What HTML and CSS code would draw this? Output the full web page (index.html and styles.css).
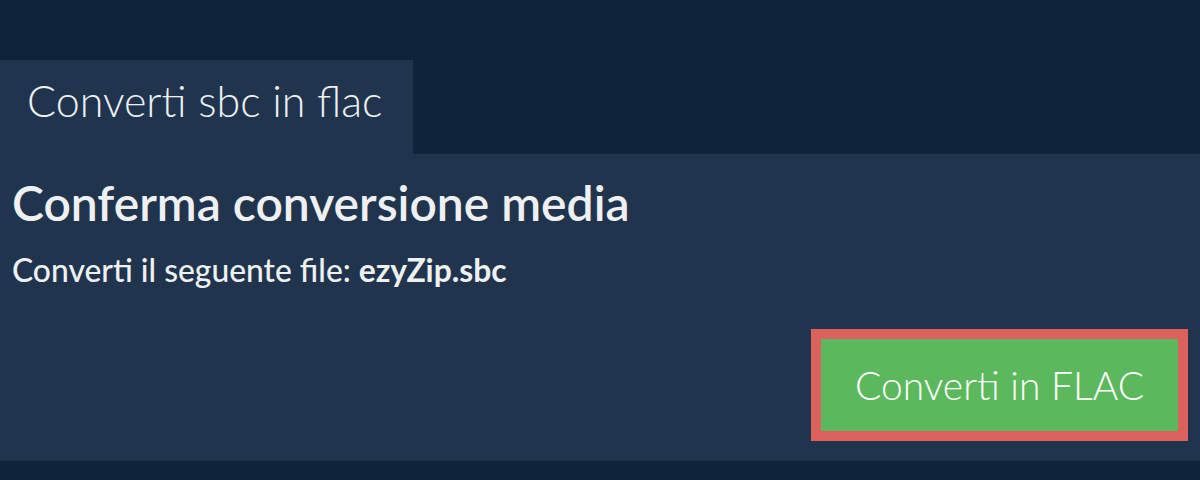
FILE: index.html
```html
<!DOCTYPE html>
<html lang="it">
<head>
<meta charset="utf-8">
<title>Converti sbc in flac</title>
<link rel="stylesheet" href="styles.css">
</head>
<body>
<div class="page">
  <div class="tabs">
    <div class="tab">Converti sbc in flac</div>
  </div>
  <div class="panel">
    <h1 class="title">Conferma conversione media</h1>
    <p class="desc">Converti il seguente file: <b>ezyZip.sbc</b></p>
    <div class="actions">
      <button class="convert">Converti in FLAC</button>
    </div>
  </div>
</div>
</body>
</html>
```
FILE: styles.css
```css
html, body {
  margin: 0;
  padding: 0;
  background: #0f233a;
  font-family: Lato, "Open Sans", sans-serif;
  color: #eef0f2;
}
.page {
  width: 1200px;
  height: 480px;
  padding-top: 60px;
  box-sizing: border-box;
}
.tabs {
  display: flex;
}
.tab {
  width: 413px;
  height: 94px;
  box-sizing: border-box;
  padding-left: 27px;
  background: #20354d;
  font-size: 43px;
  font-weight: 300;
  line-height: 81px;
}
.panel {
  height: 307px;
  background: #20354d;
  box-sizing: border-box;
  padding: 20px 12px 0 12px;
  display: flex;
  flex-direction: column;
}
.title {
  margin: 0;
  font-size: 48px;
  font-weight: 600;
  line-height: 58px;
}
.desc {
  margin: 20px 0 0 0;
  font-size: 31.8px;
  font-weight: 500;
  line-height: 37px;
}
.desc b {
  font-weight: 700;
}
.actions {
  display: flex;
  justify-content: flex-end;
  margin-top: 40px;
}
.convert {
  width: 377px;
  height: 112px;
  box-sizing: border-box;
  border: 10px solid #dc605c;
  background: #5cb85c;
  color: #ffffff;
  font-family: Lato, "Open Sans", sans-serif;
  font-size: 39px;
  font-weight: 300;
  padding: 0;
  cursor: pointer;
}
```
